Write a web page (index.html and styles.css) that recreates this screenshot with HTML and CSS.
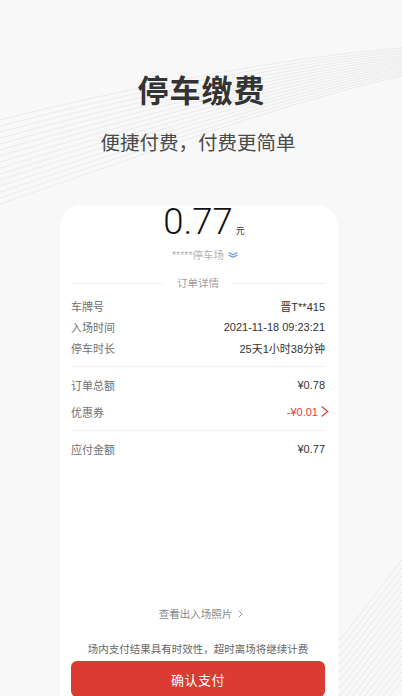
FILE: index.html
```html
<!DOCTYPE html>
<html lang="zh-CN">
<head>
<meta charset="utf-8">
<title>停车缴费</title>
<link rel="stylesheet" href="styles.css">
</head>
<body>
<div class="page">
  <svg class="bg" width="402" height="696" viewBox="0 0 402 696" fill="none" stroke="#e4e4e4" stroke-width="0.7">
    <path d="M402 48 C300 56 150 82 0 120"/>
    <path d="M402 50 C300 59 150 87 0 126"/>
    <path d="M402 52 C300 62 150 92 0 132"/>
    <path d="M402 54 C300 65 150 97 0 138"/>
    <path d="M402 56 C300 68 150 102 0 144"/>
    <path d="M402 58 C300 71 150 107 0 150"/>
    <path d="M402 60 C300 74 150 112 0 156"/>
    <path d="M402 62 C300 77 150 117 0 162"/>
    <path d="M402 64 C300 80 150 122 0 168"/>
    <path d="M402 66 C300 83 150 127 0 174"/>
    <path d="M402 68 C300 86 150 132 0 180"/>
    <path d="M402 70 C300 89 150 137 0 186"/>
    <path d="M402 72 C300 92 150 142 0 192"/>
    <path d="M402 74 C300 95 150 147 0 198"/>
    <path d="M402 76 C300 98 150 152 0 204"/>
    <path d="M340 640 L402 560"/>
    <path d="M340 648 L402 568"/>
    <path d="M340 656 L402 576"/>
    <path d="M340 664 L402 584"/>
    <path d="M340 672 L402 592"/>
    <path d="M340 680 L402 600"/>
    <path d="M340 688 L402 608"/>
    <path d="M340 696 L402 616"/>
    <path d="M340 704 L402 624"/>
    <path d="M340 712 L402 632"/>
    <path d="M340 720 L402 640"/>
    <path d="M340 728 L402 648"/>
    <path d="M340 736 L402 656"/>
    <path d="M340 744 L402 664"/>
    <path d="M340 752 L402 672"/>
    <path d="M340 760 L402 680"/>
  </svg>

  <header class="hero">
    <h1 class="title">停车缴费</h1>
    <p class="subtitle">便捷付费，付费更简单</p>
  </header>

  <main class="card">
    <div class="amount"><span class="amount-num">0.77</span><span class="amount-unit">元</span></div>
    <div class="lot"><span>*****停车场</span><svg class="lot-icon" width="10" height="6" viewBox="0 0 10 6" fill="none" stroke="#5b8fdc" stroke-width="1.1" stroke-linecap="round" stroke-linejoin="round"><path d="M1 0.8 L5 2.8 L9 0.8"/><path d="M1 3.2 L5 5.2 L9 3.2"/></svg></div>

    <div class="section-title"><span class="st-line"></span><span class="st-text">订单详情</span><span class="st-line"></span></div>

    <div class="rows">
      <div class="row"><span class="label">车牌号</span><span class="value">晋T**415</span></div>
      <div class="row"><span class="label">入场时间</span><span class="value">2021-11-18 09:23:21</span></div>
      <div class="row"><span class="label">停车时长</span><span class="value">25天1小时38分钟</span></div>
    </div>
    <div class="divider"></div>
    <div class="rows rows-loose">
      <div class="row"><span class="label">订单总额</span><span class="value">¥0.78</span></div>
      <div class="row"><span class="label">优惠券</span><span class="value value-red">-¥0.01<svg class="red-chev" width="8" height="11" viewBox="0 0 8 11" fill="none" stroke="#e0403a" stroke-width="1.3" stroke-linecap="round" stroke-linejoin="round"><path d="M1.2 1 L6.8 5.5 L1.2 10"/></svg></span></div>
    </div>
    <div class="divider"></div>
    <div class="rows">
      <div class="row"><span class="label">应付金额</span><span class="value">¥0.77</span></div>
    </div>

    <div class="footer">
      <a class="photos">查看出入场照片<svg class="gray-chev" width="5" height="8" viewBox="0 0 5 8" fill="none" stroke="#999" stroke-width="1" stroke-linecap="round" stroke-linejoin="round"><path d="M1 1 L4 4 L1 7"/></svg></a>
      <p class="notice">场内支付结果具有时效性，超时离场将继续计费</p>
      <button class="pay">确认支付</button>
    </div>
  </main>
</div>
</body>
</html>
```

FILE: styles.css
```css
* { box-sizing: border-box; }
html, body {
  margin: 0;
  padding: 0;
  background: #f8f8f8;
}
body {
  font-family: "Liberation Sans", "Noto Sans CJK SC", sans-serif;
  color: #333;
  overflow: hidden;
}
.page {
  position: relative;
  width: 402px;
  height: 696px;
  overflow: hidden;
  background: #f8f8f8;
}
.bg {
  position: absolute;
  left: 0;
  top: 0;
  z-index: 0;
}
.hero {
  position: relative;
  z-index: 1;
  padding-top: 69px;
  text-align: center;
}
.title {
  margin: 0;
  font-family: "Noto Sans CJK SC", sans-serif;
  font-size: 31px;
  line-height: 40px;
  font-weight: 700;
  color: #333;
  letter-spacing: 1px;
  padding-left: 1px;
}
.subtitle {
  margin: 19px 0 0;
  font-family: "Noto Sans CJK SC", sans-serif;
  font-size: 19.5px;
  line-height: 28px;
  font-weight: 400;
  color: #4a4a4a;
  padding-right: 6px;
}
.card {
  position: relative;
  z-index: 1;
  margin: 49px 64px 0 60px;
  height: 496px;
  background: #fff;
  border-radius: 22px 22px 0 0;
  padding: 0 13px 4px 11px;
  display: flex;
  flex-direction: column;
}
.amount {
  text-align: center;
  line-height: 34px;
  height: 34px;
}
.amount-num {
  font-family: Roboto, "Liberation Sans", sans-serif;
  font-weight: 300;
  font-size: 36.5px;
  color: #111;
}
.amount-unit {
  font-family: "Noto Sans CJK SC", sans-serif;
  font-size: 9px;
  color: #333;
  margin-left: 3px;
  margin-right: -12px;
}
.lot {
  margin-top: 8px;
  height: 16px;
  line-height: 16px;
  font-size: 10.5px;
  color: #b5b5b5;
  display: flex;
  justify-content: center;
  align-items: center;
}
.lot-icon {
  margin-left: 4px;
  margin-right: -14px;
}
.section-title {
  margin-top: 12px;
  height: 16px;
  display: flex;
  align-items: center;
}
.st-line {
  flex: 1;
  height: 1px;
  background: #efefef;
}
.st-text {
  padding: 0 14px;
  font-size: 10.5px;
  line-height: 16px;
  color: #a0a0a0;
}
.rows {
  display: flex;
  flex-direction: column;
}
.section-title + .rows { margin-top: 4px; }
.rows-loose { gap: 5.5px; }
.row {
  height: 21px;
  display: flex;
  justify-content: space-between;
  align-items: center;
  font-size: 11px;
}
.label {
  color: #707070;
  font-family: "Noto Sans CJK SC", sans-serif;
}
.value {
  color: #333;
  display: flex;
  align-items: center;
}
.value-red {
  color: #e0403a;
}
.red-chev {
  margin-left: 3px;
  margin-right: -4px;
}
.divider {
  height: 1px;
  background: #f0f0f0;
  margin: 8px 0 7.5px;
}
.footer {
  margin-top: auto;
  display: flex;
  flex-direction: column;
  align-items: center;
}
.photos {
  height: 16px;
  line-height: 16px;
  font-size: 10.5px;
  color: #888;
  display: flex;
  align-items: center;
  gap: 6px;
  margin-left: 6px;
}
.notice {
  margin: 19px 0 0;
  height: 16px;
  line-height: 16px;
  font-size: 10.5px;
  color: #666;
  white-space: nowrap;
}
.pay {
  margin-top: 4px;
  width: 100%;
  height: 36px;
  border: none;
  border-radius: 6px;
  background: #db3b30;
  color: #fff;
  font-family: "Noto Sans CJK SC", sans-serif;
  font-size: 13px;
  letter-spacing: 0.5px;
  padding: 0;
}
```
